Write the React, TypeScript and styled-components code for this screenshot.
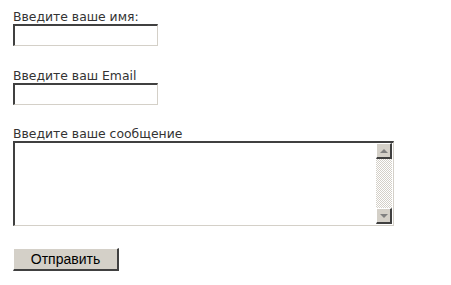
import styled, { createGlobalStyle } from 'styled-components'

const GlobalStyle = createGlobalStyle`
  html, body {
    margin: 0;
    padding: 0;
    background: #ffffff;
  }
  body {
    font-family: 'DejaVu Sans', Verdana, sans-serif;
  }
`

const Form = styled.form`
  display: flex;
  flex-direction: column;
  align-items: flex-start;
  padding: 10px 13px;
`

const Field = styled.div<{ $gap: number }>`
  display: flex;
  flex-direction: column;
  align-items: flex-start;
  margin-bottom: ${(p) => p.$gap}px;
`

const Label = styled.label`
  font-size: 12.4px;
  line-height: 14px;
  color: #333333;
`

const TextInput = styled.input`
  box-sizing: border-box;
  width: 145px;
  height: 22px;
  margin: 0;
  padding: 1px 2px;
  background: #ffffff;
  border-style: solid;
  border-width: 2px 1px 1px 2px;
  border-color: #404040 #d4d0c8 #d4d0c8 #404040;
  outline: none;
  font-family: 'DejaVu Sans', Verdana, sans-serif;
  font-size: 12px;
`

const AreaFrame = styled.div`
  box-sizing: border-box;
  display: flex;
  width: 381px;
  height: 85px;
  background: #ffffff;
  border-style: solid;
  border-width: 2px 1px 1px 2px;
  border-color: #404040 #d4d0c8 #d4d0c8 #404040;
`

const Area = styled.textarea`
  flex: 1;
  margin: 0;
  padding: 2px;
  border: none;
  outline: none;
  resize: none;
  overflow: hidden;
  font-family: 'DejaVu Sans', Verdana, sans-serif;
  font-size: 12px;
`

const ScrollBar = styled.div`
  display: flex;
  flex-direction: column;
  justify-content: space-between;
  width: 16px;
  margin: 0 1px 1px 0;
  background-color: #ffffff;
  background-image: repeating-conic-gradient(#d4d0c8 0 25%, #ffffff 0 50%);
  background-size: 2px 2px;
`

const ScrollButton = styled.div<{ $down?: boolean }>`
  box-sizing: border-box;
  display: flex;
  align-items: center;
  justify-content: center;
  width: 16px;
  height: 16px;
  background: #d4d0c8;
  border-style: solid;
  border-width: 1px 2px 2px 1px;
  border-color: #ffffff #404040 #404040 #ffffff;

  &::after {
    content: '';
    width: 0;
    height: 0;
    border-left: 4px solid transparent;
    border-right: 4px solid transparent;
    ${(p) =>
      p.$down
        ? 'border-top: 4px solid #808080;'
        : 'border-bottom: 4px solid #808080;'}
  }
`

const SubmitButton = styled.button`
  box-sizing: border-box;
  width: 106px;
  height: 23px;
  margin: 0;
  padding: 0;
  background: #d4d0c8;
  border-style: solid;
  border-width: 1px 2px 2px 1px;
  border-color: #ffffff #404040 #404040 #ffffff;
  font-family: 'Liberation Sans', Arial, sans-serif;
  font-size: 14px;
  color: #000000;
`

export default function App() {
  return (
    <>
      <GlobalStyle />
      <Form onSubmit={(e) => e.preventDefault()}>
        <Field $gap={23}>
          <Label htmlFor="name">Введите ваше имя:</Label>
          <TextInput id="name" type="text" />
        </Field>
        <Field $gap={22}>
          <Label htmlFor="email">Введите ваш Email</Label>
          <TextInput id="email" type="text" />
        </Field>
        <Field $gap={22}>
          <Label htmlFor="message">Введите ваше сообщение</Label>
          <AreaFrame>
            <Area id="message" />
            <ScrollBar>
              <ScrollButton />
              <ScrollButton $down />
            </ScrollBar>
          </AreaFrame>
        </Field>
        <SubmitButton type="submit">Отправить</SubmitButton>
      </Form>
    </>
  )
}
